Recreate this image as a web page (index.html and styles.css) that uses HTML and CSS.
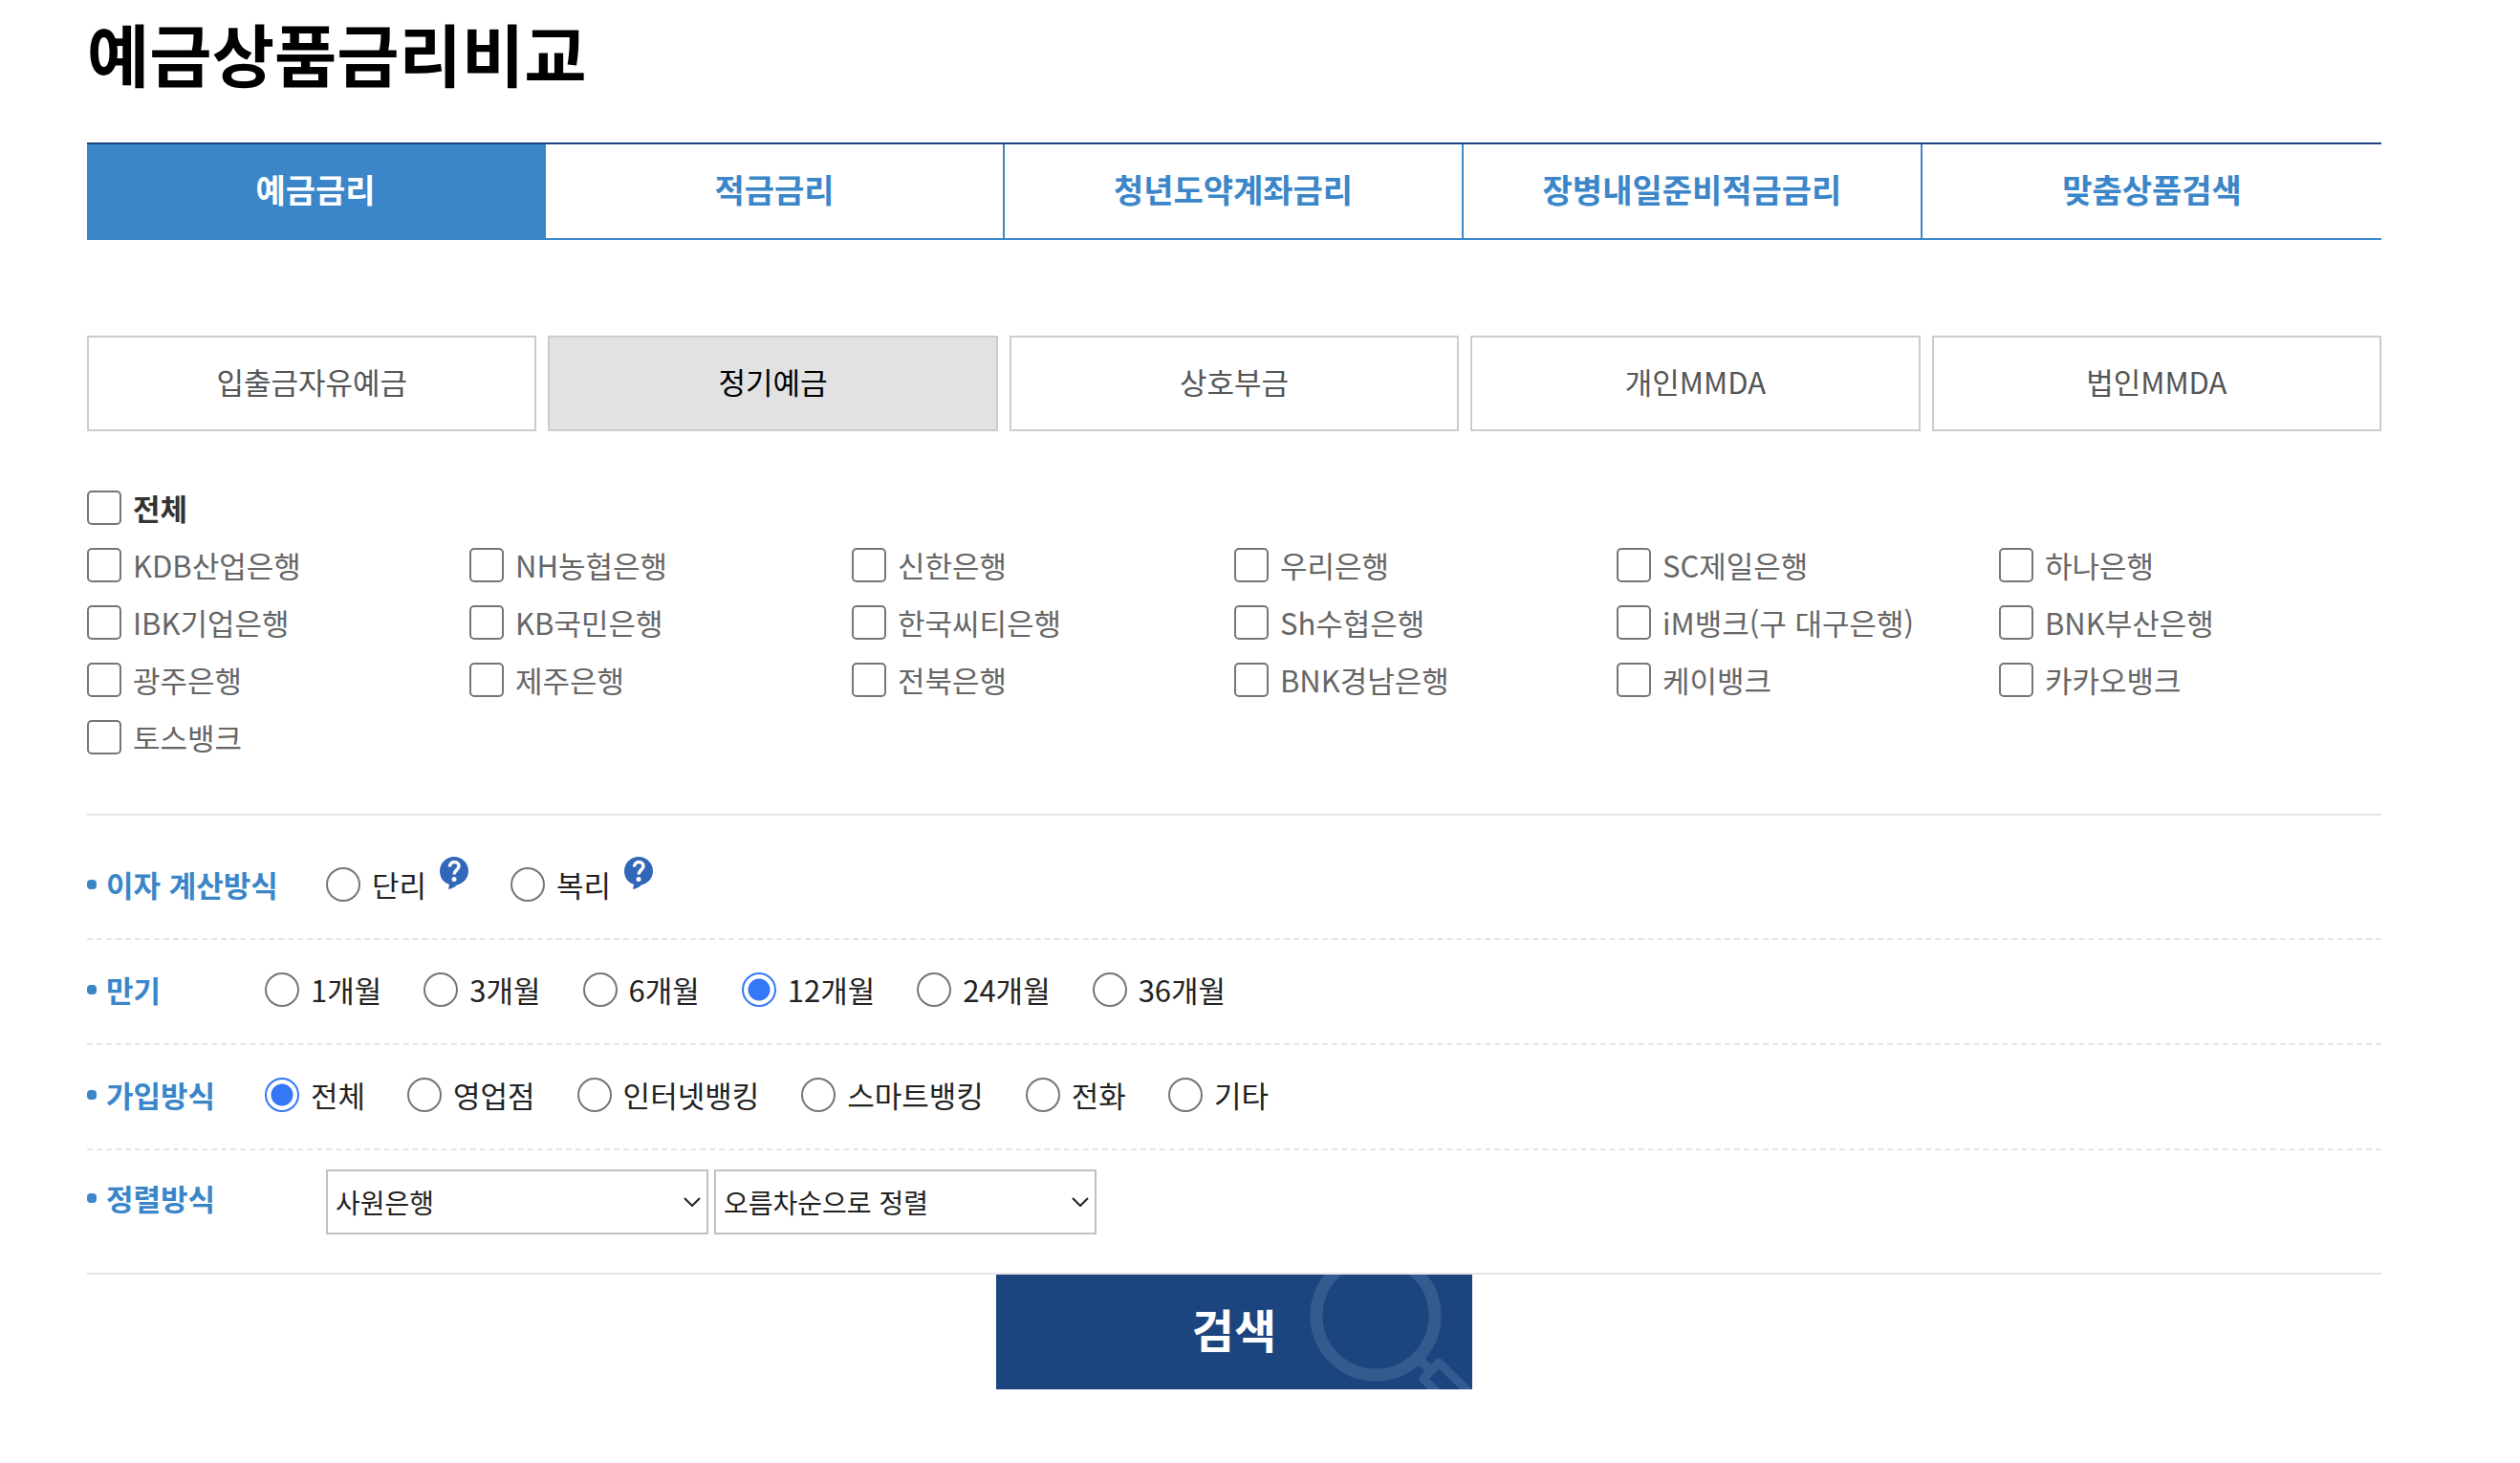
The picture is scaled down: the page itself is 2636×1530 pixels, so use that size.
FILE: index.html
```html
<!DOCTYPE html>
<html lang="ko">
<head>
    <meta charset="UTF-8">
    <meta name="viewport" content="width=device-width, initial-scale=1.0">
    <title>예금상품금리비교</title>
    <link rel="stylesheet" href="styles.css">
</head>

<body>
    <h1>예금상품금리비교</h1>

    <!-- 상단 탭 -->
    <nav class="tab">
        <a href="#" class="on">예금금리</a>
        <a href="#">적금금리</a>
        <a href="#">청년도약계좌금리</a>
        <a href="#">장병내일준비적금금리</a>
        <a href="#">맞춤상품검색</a>
    </nav>

    <!-- 예금 종류 -->
    <nav class="subtab">
        <a href="#">입출금자유예금</a>
        <a href="#" class="on">정기예금</a>
        <a href="#">상호부금</a>
        <a href="#">개인MMDA</a>
        <a href="#">법인MMDA</a>
    </nav>

    <form>
        <!-- 은행 선택 -->
        <div class="bank">
            <label class="all"><input type="checkbox" name="bankAll">전체</label>
            <label><input type="checkbox" name="bank">KDB산업은행</label>
            <label><input type="checkbox" name="bank">NH농협은행</label>
            <label><input type="checkbox" name="bank">신한은행</label>
            <label><input type="checkbox" name="bank">우리은행</label>
            <label><input type="checkbox" name="bank">SC제일은행</label>
            <label><input type="checkbox" name="bank">하나은행</label>
            <label><input type="checkbox" name="bank">IBK기업은행</label>
            <label><input type="checkbox" name="bank">KB국민은행</label>
            <label><input type="checkbox" name="bank">한국씨티은행</label>
            <label><input type="checkbox" name="bank">Sh수협은행</label>
            <label><input type="checkbox" name="bank">iM뱅크(구 대구은행)</label>
            <label><input type="checkbox" name="bank">BNK부산은행</label>
            <label><input type="checkbox" name="bank">광주은행</label>
            <label><input type="checkbox" name="bank">제주은행</label>
            <label><input type="checkbox" name="bank">전북은행</label>
            <label><input type="checkbox" name="bank">BNK경남은행</label>
            <label><input type="checkbox" name="bank">케이뱅크</label>
            <label><input type="checkbox" name="bank">카카오뱅크</label>
            <label><input type="checkbox" name="bank">토스뱅크</label>
        </div>

        <!-- 검색 조건 -->
        <div class="row first wide" role="radiogroup" aria-labelledby="t1">
            <span class="tit" id="t1">이자 계산방식</span>
            <div class="opt">
                <div class="item">
                    <label><input type="radio" name="intr">단리</label>
                    <a href="#" class="help" aria-label="단리 도움말">
                        <svg viewBox="0 0 30 34" width="30" height="34">
                            <path d="M15 0C6.700 0 0 6.700 0 15c0 7 4 12 10 14l-1 5c4-1 7-2 9-4.500C25 28 30 22 30 15 30 6.700 23.300 0 15 0z" fill="#3166b8"/>
                            <path d="M10.500 10.500c0-3 2-5 4.800-5s4.700 1.800 4.700 4.300c0 4-5 4.200-5 8.700" fill="none" stroke="#fff" stroke-width="3.500"/>
                            <circle cx="15" cy="23.500" r="2.500" fill="#fff"/>
                        </svg>
                    </a>
                </div>
                <div class="item">
                    <label><input type="radio" name="intr">복리</label>
                    <a href="#" class="help" aria-label="복리 도움말">
                        <svg viewBox="0 0 30 34" width="30" height="34">
                            <path d="M15 0C6.700 0 0 6.700 0 15c0 7 4 12 10 14l-1 5c4-1 7-2 9-4.500C25 28 30 22 30 15 30 6.700 23.300 0 15 0z" fill="#3166b8"/>
                            <path d="M10.500 10.500c0-3 2-5 4.800-5s4.700 1.800 4.700 4.300c0 4-5 4.200-5 8.700" fill="none" stroke="#fff" stroke-width="3.500"/>
                            <circle cx="15" cy="23.500" r="2.500" fill="#fff"/>
                        </svg>
                    </a>
                </div>
            </div>
        </div>

        <div class="row" role="radiogroup" aria-labelledby="t2">
            <span class="tit" id="t2">만기</span>
            <div class="opt">
                <label><input type="radio" name="month">1개월</label>
                <label><input type="radio" name="month">3개월</label>
                <label><input type="radio" name="month">6개월</label>
                <label><input type="radio" name="month" checked>12개월</label>
                <label><input type="radio" name="month">24개월</label>
                <label><input type="radio" name="month">36개월</label>
            </div>
        </div>

        <div class="row" role="radiogroup" aria-labelledby="t3">
            <span class="tit" id="t3">가입방식</span>
            <div class="opt">
                <label><input type="radio" name="join" checked>전체</label>
                <label><input type="radio" name="join">영업점</label>
                <label><input type="radio" name="join">인터넷뱅킹</label>
                <label><input type="radio" name="join">스마트뱅킹</label>
                <label><input type="radio" name="join">전화</label>
                <label><input type="radio" name="join">기타</label>
            </div>
        </div>

        <div class="row sort wide">
            <label class="tit" for="sortKey">정렬방식</label>
            <div class="sel">
                <select id="sortKey">
                    <option>사원은행</option>
                </select>
                <select id="sortDir" aria-label="정렬순서">
                    <option>오름차순으로 정렬</option>
                </select>
            </div>
        </div>

        <button type="button" class="search">
            <svg viewBox="0 0 498 120" width="498" height="120" fill="none" stroke="#345a8f">
                <circle cx="397" cy="43" r="62" stroke-width="13"/>
                <path d="M442 88l13 13" stroke-width="10"/>
                <path d="M500 128L463 92l-16 17 22 22" stroke-width="9" stroke-linejoin="round"/>
            </svg>
            <span>검색</span>
        </button>
    </form>
</body>
</html>
```
FILE: styles.css
```css
* {
    box-sizing: border-box;
}

body {
    margin: 0;
    padding: 4px 145px 77px 91px;
    background-color: #fff;
    color: #222;
    font-family: "Noto Sans CJK KR", sans-serif;
    font-size: 31px;
    line-height: 36px;
}

a {
    text-decoration: none;
}

h1 {
    margin: 0 0 45px;
    color: #000;
    font-size: 71px;
    line-height: 100px;
    font-weight: bold;
}

/* 상단 탭 */
.tab {
    display: grid;
    grid-template-columns: repeat(5, 1fr);
    border-top: 2px solid #1c4580;
    border-bottom: 2px solid #3b86c8;
}

.tab a {
    padding-bottom: 4px;
    border-right: 2px solid #3b86c8;
    color: #3b86c8;
    font-size: 34px;
    font-weight: bold;
    line-height: 94px;
    text-align: center;
}

.tab a:last-child {
    border-right: 0;
}

.tab a.on {
    background-color: #3b86c8;
    color: #fff;
}

/* 예금 종류 */
.subtab {
    display: grid;
    grid-template-columns: repeat(5, 1fr);
    gap: 12px;
    margin-top: 100px;
}

.subtab a {
    padding-bottom: 4px;
    border: 2px solid #ccc;
    color: #555;
    line-height: 92px;
    text-align: center;
}

.subtab a.on {
    background-color: #e2e2e2;
    color: #000;
}

/* 은행 선택 */
.bank {
    display: grid;
    grid-template-columns: repeat(6, 1fr);
    row-gap: 24px;
    padding: 62px 0;
    border-bottom: 2px solid #e5e5e5;
    color: #666;
}

.bank .all {
    grid-column: 1 / -1;
    color: #333;
    font-weight: bold;
}

label {
    display: flex;
    align-items: center;
    gap: 12px;
    white-space: nowrap;
}

input {
    appearance: none;
    flex: none;
    width: 36px;
    height: 36px;
    margin: 0;
    border: 2px solid #767676;
    border-radius: 5px;
    background-color: #fff;
}

input[type="radio"] {
    border-radius: 50%;
}

input[type="radio"]:checked {
    border-color: #3478f6;
    background: radial-gradient(circle, #3478f6 11px, #fff 12px);
}

input[type="checkbox"]:checked {
    background-color: #3478f6;
}

/* 검색 조건 */
.row {
    display: flex;
    align-items: flex-start;
    padding: 34px 0 38px;
    border-bottom: 2px dashed #e5e5e5;
}

.row.first {
    padding-top: 54px;
}

.tit {
    display: flex;
    align-items: center;
    gap: 10px;
    width: 186px;
    color: #3b86c8;
    font-size: 31px;
    font-weight: bold;
}

.wide .tit {
    width: 250px;
}

.tit::before {
    content: "";
    width: 10px;
    height: 10px;
    border-radius: 4px;
    background-color: #3b86c8;
}

.opt {
    display: flex;
    gap: 44px;
}

.item {
    display: flex;
    gap: 14px;
    height: 36px;
}

.help {
    margin-top: -11px;
}

.help svg {
    display: block;
}

.row.sort {
    padding: 20px 0 40px;
    border-bottom-style: solid;
}

.sort .tit {
    gap: 10px;
    line-height: 60px;
}

.sel {
    display: flex;
    gap: 6px;
}

select {
    appearance: none;
    width: 400px;
    height: 68px;
    padding: 0 8px;
    border: 2px solid #c1c1c1;
    border-radius: 0;
    background: #fff url("data:image/svg+xml,%3Csvg xmlns='http://www.w3.org/2000/svg' width='18' height='10' fill='none' stroke='%23222' stroke-width='2'%3E%3Cpath d='M1 1l8 8 8-8'/%3E%3C/svg%3E") no-repeat right 6px center;
    color: #222;
    font-family: inherit;
    font-size: 28px;
}

.search {
    display: block;
    position: relative;
    width: 498px;
    height: 120px;
    margin: 0 auto;
    padding: 0 0 8px;
    border: 0;
    background-color: #1c4580;
    color: #fff;
    font-family: inherit;
    font-size: 48px;
    font-weight: bold;
    cursor: pointer;
}

.search svg {
    position: absolute;
    top: 0;
    left: 0;
}

.search span {
    position: relative;
}
```
